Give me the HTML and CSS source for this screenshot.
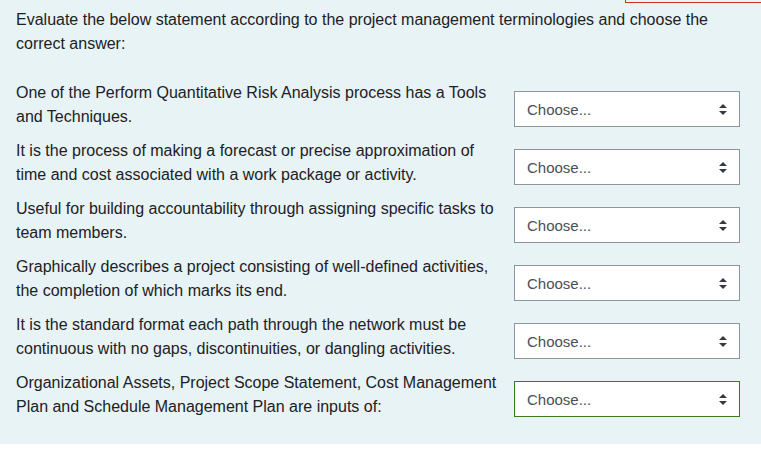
FILE: index.html
```html
<!DOCTYPE html>
<html lang="en">
<head>
<meta charset="utf-8">
<link rel="stylesheet" href="styles.css">
</head>
<body>
<div class="page">
  <div class="flag"></div>
  <div class="formulation">
    <p class="intro">Evaluate the below statement according to the project management terminologies and choose the correct answer:</p>
    <div class="rows">
      <div class="row">
        <div class="text">One of the Perform Quantitative Risk Analysis process has a Tools and Techniques.</div>
        <div class="select"><span>Choose...</span><svg class="arrows" width="8" height="11" viewBox="0 0 8 11"><path d="M4 0 L8 4 L0 4 Z M0 7 L8 7 L4 11 Z" fill="#343a40"/></svg></div>
      </div>
      <div class="row">
        <div class="text">It is the process of making a forecast or precise approximation of time and cost associated with a work package or activity.</div>
        <div class="select"><span>Choose...</span><svg class="arrows" width="8" height="11" viewBox="0 0 8 11"><path d="M4 0 L8 4 L0 4 Z M0 7 L8 7 L4 11 Z" fill="#343a40"/></svg></div>
      </div>
      <div class="row">
        <div class="text">Useful for building accountability through assigning specific tasks to team members.</div>
        <div class="select"><span>Choose...</span><svg class="arrows" width="8" height="11" viewBox="0 0 8 11"><path d="M4 0 L8 4 L0 4 Z M0 7 L8 7 L4 11 Z" fill="#343a40"/></svg></div>
      </div>
      <div class="row">
        <div class="text">Graphically describes a project consisting of well-defined activities, the completion of which marks its end.</div>
        <div class="select"><span>Choose...</span><svg class="arrows" width="8" height="11" viewBox="0 0 8 11"><path d="M4 0 L8 4 L0 4 Z M0 7 L8 7 L4 11 Z" fill="#343a40"/></svg></div>
      </div>
      <div class="row">
        <div class="text">It is the standard format each path through the network must be continuous with no gaps, discontinuities, or dangling activities.</div>
        <div class="select"><span>Choose...</span><svg class="arrows" width="8" height="11" viewBox="0 0 8 11"><path d="M4 0 L8 4 L0 4 Z M0 7 L8 7 L4 11 Z" fill="#343a40"/></svg></div>
      </div>
      <div class="row">
        <div class="text">Organizational Assets, Project Scope Statement, Cost Management Plan and Schedule Management Plan are inputs of:</div>
        <div class="select focused"><span>Choose...</span><svg class="arrows" width="8" height="11" viewBox="0 0 8 11"><path d="M4 0 L8 4 L0 4 Z M0 7 L8 7 L4 11 Z" fill="#343a40"/></svg></div>
      </div>
    </div>
  </div>
</div>
</body>
</html>
```

FILE: styles.css
```css
html, body {
  margin: 0;
  padding: 0;
  background: #ffffff;
}

body {
  font-family: "Liberation Sans", Arial, sans-serif;
  font-size: 16px;
  color: #1d2125;
}

.page {
  position: relative;
  overflow: hidden;
}

.flag {
  position: absolute;
  left: 625px;
  top: -20px;
  width: 200px;
  height: 21px;
  border: 1px solid #ca3120;
}

.formulation {
  background: #e7f3f5;
  padding: 8px 21px 25px 16px;
}

.intro {
  margin: 0 0 25px 0;
  line-height: 24px;
}

.rows {
  display: flex;
  flex-direction: column;
  gap: 10px;
}

.row {
  display: flex;
  align-items: flex-start;
  gap: 14px;
}

.text {
  width: 484px;
  line-height: 24px;
  flex: none;
}

.select {
  margin-top: 10px;
  box-sizing: border-box;
  width: 226px;
  height: 36px;
  background: #ffffff;
  border: 1px solid #8f959e;
  display: flex;
  align-items: center;
  justify-content: space-between;
  padding: 0 12px 0 12px;
  color: #495057;
  font-size: 15px;
}

.select.focused {
  border-color: #3d7a1a;
}

.arrows {
  display: block;
}
```
